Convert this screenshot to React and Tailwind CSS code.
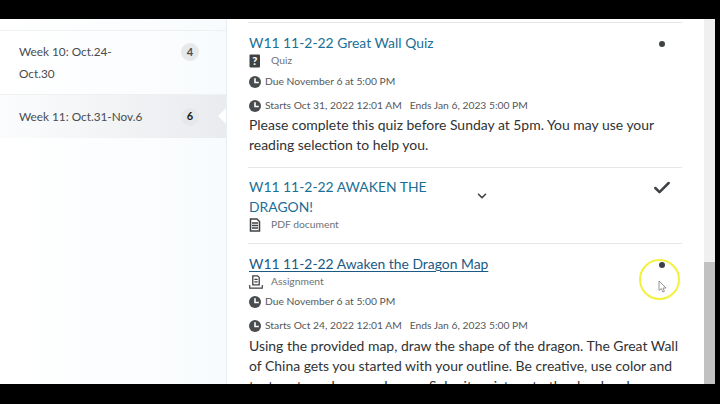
import React from "react";
import { ChevronDown, Check } from "lucide-react";

function ClockIcon() {
  return (
    <svg width="12" height="12" viewBox="0 0 12 12" className="mb-[1px] shrink-0">
      <circle cx="6" cy="6" r="6" fill="#494c4e" />
      <path d="M6 2.2V6.5H9.8" fill="none" stroke="#fff" strokeWidth="1.6" />
    </svg>
  );
}

function QuizIcon() {
  return (
    <svg width="12" height="14" viewBox="0 0 12 14" className="shrink-0">
      <rect x="0.5" y="0.5" width="10.5" height="13" rx="1" fill="#3f4244" />
      <text x="5.7" y="11.2" textAnchor="middle" fontSize="11" fontWeight="900" fill="#fff" fontFamily="Lato, sans-serif">?</text>
    </svg>
  );
}

function DocIcon() {
  return (
    <svg width="12" height="14" viewBox="0 0 12 14" className="shrink-0">
      <path d="M1.5 1H8L10.5 3.5V13H1.5Z" fill="none" stroke="#3f4244" strokeWidth="1.5" />
      <path d="M3 5H9M3 7.5H9M3 10H9" stroke="#3f4244" strokeWidth="1.4" />
    </svg>
  );
}

function AssignmentIcon() {
  return (
    <svg width="14" height="14" viewBox="0 0 14 14" className="shrink-0">
      <path d="M3.8 0.8H8.6L10.2 2.4V9.8H3.8Z" fill="none" stroke="#3f4244" strokeWidth="1.3" />
      <path d="M5.4 4.4H8.6M5.4 6.8H8.6" stroke="#3f4244" strokeWidth="1.2" />
      <path d="M0.7 10V13.2H13.3V10" fill="none" stroke="#3f4244" strokeWidth="1.2" />
    </svg>
  );
}

function Dot() {
  return <div className="h-[6px] w-[6px] rounded-full bg-[#3f4244]" />;
}

function Meta({ children, className = "" }) {
  return (
    <div className={`flex h-[14px] items-center gap-[4px] text-[10.3px] text-[#55585a] ${className}`}>
      <ClockIcon />
      <span className="whitespace-pre">{children}</span>
    </div>
  );
}

function TypeRow({ icon, label, className = "" }) {
  return (
    <div className={`flex h-[14px] items-center text-[10.3px] text-[#6e7376] ${className}`}>
      <div className="w-[22px]">{icon}</div>
      <span>{label}</span>
    </div>
  );
}

function WeekRow({ label, count, active }) {
  return (
    <div
      className={`relative flex justify-between pl-[19px] pr-[27px] ${
        active
          ? "h-[44px] items-center border-t border-[#eef0f2] bg-gradient-to-r from-[#fbfcfd] to-[#e9ebee]"
          : "h-[64px] border-t border-[#eef0f2] pt-[10px]"
      }`}
    >
      <div className="w-[125px] text-[11.8px] leading-[22px] text-[#494c4e]">{label}</div>
      <div
        className={`flex h-[18px] w-[18px] items-center justify-center rounded-full text-[11px] font-bold ${
          active ? "bg-[#e6e8ea] text-[#202122]" : "mt-[2px] bg-[#e6e8ea] text-[#494c4e]"
        }`}
      >
        {count}
      </div>
      {active ? (
        <div className="absolute right-0 top-[13px] h-0 w-0 border-y-[8px] border-r-[8px] border-y-transparent border-r-white" />
      ) : null}
    </div>
  );
}

export default function App() {
  return (
    <div className="flex h-[404px] w-[720px] flex-col overflow-hidden bg-black font-['Lato',sans-serif]">
      <div className="h-[19px] shrink-0 bg-black" />
      <div className="relative flex h-[365px] w-[715px] shrink-0 overflow-hidden bg-white">
        <aside className="w-[227px] shrink-0 border-r border-[#e9eef2] bg-gradient-to-r from-white to-[#f8fbfd] pt-[11px]">
          <WeekRow label="Week 10: Oct.24-Oct.30" count="4" />
          <WeekRow label="Week 11: Oct.31-Nov.6" count="6" active />
        </aside>

        <main className="w-[455px] shrink-0 pl-[21px] pt-[3px]">
          <section className="relative h-[146px] border-y border-[#e6e6e6] pl-px pt-[10px]">
            <div className="text-[13.9px] leading-[20px] text-[#1a6f96]">W11 11-2-22 Great Wall Quiz</div>
            <div className="absolute right-[17px] top-[18px]"><Dot /></div>
            <TypeRow icon={<QuizIcon />} label="Quiz" className="mt-[1px]" />
            <Meta className="mt-[7px]">Due November 6 at 5:00 PM</Meta>
            <Meta className="mt-[10px]">{"Starts Oct 31, 2022 12:01 AM   Ends Jan 6, 2023 5:00 PM"}</Meta>
            <p className="mt-[2px] text-[13.95px] leading-[20px] text-[#303335]">
              Please complete this quiz before Sunday at 5pm. You may use your reading selection to help you.
            </p>
          </section>

          <section className="relative h-[76px] border-b border-[#e6e6e6] pl-px pt-[9px]">
            <div className="w-[200px] text-[13.9px] leading-[20px] text-[#1a6f96]">W11 11-2-22 AWAKEN THE DRAGON!</div>
            <ChevronDown size={14} strokeWidth={2.8} className="absolute left-[227px] top-[21px] text-[#3f4244]" />
            <Check size={20} strokeWidth={3} className="absolute right-[10px] top-[10px] text-[#3f4244]" />
            <TypeRow icon={<DocIcon />} label="PDF document" className="mt-[1px]" />
          </section>

          <section className="relative pl-px pt-[10px]">
            <div className="text-[13.9px] leading-[20px] text-[#1a5a85] underline underline-offset-2">W11 11-2-22 Awaken the Dragon Map</div>
            <div className="absolute right-[17px] top-[18px]"><Dot /></div>
            <TypeRow icon={<AssignmentIcon />} label="Assignment" className="mt-[1px]" />
            <Meta className="mt-[6px]">Due November 6 at 5:00 PM</Meta>
            <Meta className="mt-[10px]">{"Starts Oct 24, 2022 12:01 AM   Ends Jan 6, 2023 5:00 PM"}</Meta>
            <p className="mt-[3px] text-[13.95px] leading-[20px] text-[#303335]">
              Using the provided map, draw the shape of the dragon. The Great Wall of China gets you started with your outline. Be creative, use color and texture to make your dragon. Submit a picture to the dropbox by
            </p>
          </section>
        </main>

        <div className="ml-auto flex w-[11px] shrink-0 flex-col bg-[#f0f0f0] pt-[243px]">
          <div className="flex-1 bg-[#c1c1c1]" />
        </div>

        {/* recording highlight round the pointer */}
        <div className="absolute left-[639px] top-[240px] h-[41px] w-[41px] rounded-full border-2 border-[#f2f23c]" />
        <svg width="9" height="13" viewBox="0 0 9 13" className="absolute left-[658px] top-[261px]">
          <path d="M1 1V10.5L3.3 8.6L4.8 12L6.4 11.3L5 8H8Z" fill="#fff" stroke="#8a8a8a" strokeWidth="0.9" />
        </svg>
      </div>
      <div className="flex-1 bg-black" />
    </div>
  );
}
